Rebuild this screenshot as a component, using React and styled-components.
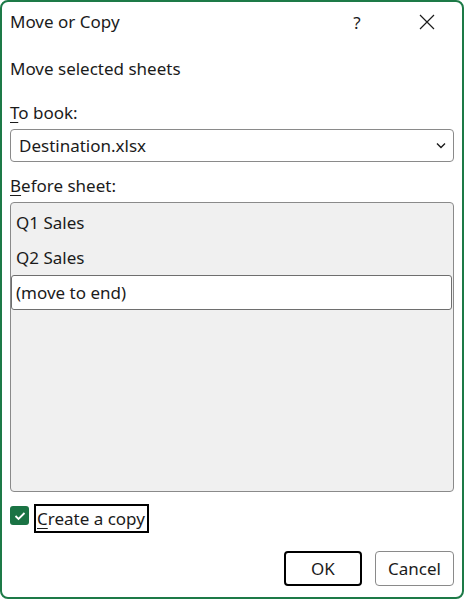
import React from "react";
import styled, { createGlobalStyle } from "styled-components";

const GlobalStyle = createGlobalStyle`
  html, body {
    margin: 0;
    padding: 0;
    background: #ffffff;
  }
  body {
    font-family: "Noto Sans", "Open Sans", sans-serif;
    color: #1b1b1b;
  }
  * {
    box-sizing: border-box;
  }
`;

const Window = styled.div`
  width: 464px;
  height: 599px;
  border: 2px solid #1d7a47;
  border-radius: 8px;
  background: #ffffff;
  display: flex;
  flex-direction: column;
  overflow: hidden;
`;

const TitleBar = styled.div`
  height: 40px;
  display: flex;
  align-items: center;
  padding-left: 8px;
`;

const Title = styled.div`
  flex: 1;
  font-size: 17px;
  margin-top: -2px;
`;

const CaptionButton = styled.div`
  width: 70px;
  height: 40px;
  display: flex;
  align-items: center;
  justify-content: center;
  font-size: 17px;
  color: #1b1b1b;
`;

const Content = styled.div`
  flex: 1;
  display: flex;
  flex-direction: column;
  padding: 17px 8px 11px 8px;
`;

const Label = styled.div`
  font-size: 17px;
  line-height: 20px;
  margin-top: ${(p) => p.$gap || 0}px;

  u {
    text-decoration-thickness: 1px;
    text-underline-offset: 3px;
  }
`;

const Select = styled.div`
  margin-top: 6px;
  height: 33px;
  border: 1px solid #8a8a8a;
  border-radius: 4px;
  display: flex;
  align-items: center;
  justify-content: space-between;
  padding: 0 7px 0 8px;
  font-size: 17px;
`;

const ListBox = styled.div`
  margin-top: 6px;
  height: 290px;
  border: 1px solid #8a8a8a;
  border-radius: 4px;
  background: #f0f0f0;
  padding-top: 2px;
  display: flex;
  flex-direction: column;
`;

const ListItem = styled.div`
  height: 35px;
  display: flex;
  align-items: center;
  padding-left: ${(p) => (p.$selected ? 4 : 5)}px;
  font-size: 17px;
  margin-right: 1px;
  ${(p) =>
    p.$selected &&
    `
    background: #ffffff;
    border: 1px solid #6e6e6e;
    border-radius: 3px;
  `}
`;

const CheckRow = styled.div`
  margin-top: 12px;
  display: flex;
  align-items: flex-start;
  gap: 5px;
`;

const CheckBox = styled.div`
  width: 19px;
  height: 19px;
  margin-top: 2px;
  border-radius: 3px;
  background: #1a7344;
  display: flex;
  align-items: center;
  justify-content: center;
`;

const FocusLabel = styled.div`
  height: 29px;
  border: 2px solid #000000;
  padding: 0 2px 0 1px;
  display: flex;
  align-items: center;
  font-size: 17px;

  u {
    text-decoration-thickness: 1px;
    text-underline-offset: 3px;
  }
`;

const Footer = styled.div`
  margin-top: auto;
  display: flex;
  justify-content: flex-end;
  gap: 13px;
`;

const Button = styled.button`
  width: ${(p) => p.$width}px;
  height: 35px;
  background: #ffffff;
  font-family: inherit;
  font-size: 17px;
  color: #1b1b1b;
  border-radius: 4px;
  border: ${(p) => (p.$default ? "2px solid #000000" : "1px solid #8a8a8a")};
  padding: 0;
`;

export default function App() {
  return (
    <>
      <GlobalStyle />
      <Window>
        <TitleBar>
          <Title>Move or Copy</Title>
          <CaptionButton>?</CaptionButton>
          <CaptionButton>
            <svg width="16" height="16" viewBox="0 0 16 16">
              <path
                d="M1 1 L15 15 M15 1 L1 15"
                stroke="#1b1b1b"
                strokeWidth="1.2"
                fill="none"
              />
            </svg>
          </CaptionButton>
        </TitleBar>
        <Content>
          <Label>Move selected sheets</Label>
          <Label $gap={24}>
            <u>T</u>o book:
          </Label>
          <Select>
            <span>Destination.xlsx</span>
            <svg width="10" height="7" viewBox="0 0 10 7">
              <path
                d="M1 1.5 L5 5.5 L9 1.5"
                stroke="#1b1b1b"
                strokeWidth="1.4"
                fill="none"
              />
            </svg>
          </Select>
          <Label $gap={14}>
            <u>B</u>efore sheet:
          </Label>
          <ListBox>
            <ListItem>Q1 Sales</ListItem>
            <ListItem>Q2 Sales</ListItem>
            <ListItem $selected>(move to end)</ListItem>
          </ListBox>
          <CheckRow>
            <CheckBox>
              <svg width="12" height="10" viewBox="0 0 12 10">
                <path
                  d="M1.5 5 L4.5 8 L10.5 2"
                  stroke="#ffffff"
                  strokeWidth="1.8"
                  fill="none"
                />
              </svg>
            </CheckBox>
            <FocusLabel>
              <span>
                <u>C</u>reate a copy
              </span>
            </FocusLabel>
          </CheckRow>
          <Footer>
            <Button $default $width={78}>
              OK
            </Button>
            <Button $width={79}>Cancel</Button>
          </Footer>
        </Content>
      </Window>
    </>
  );
}
